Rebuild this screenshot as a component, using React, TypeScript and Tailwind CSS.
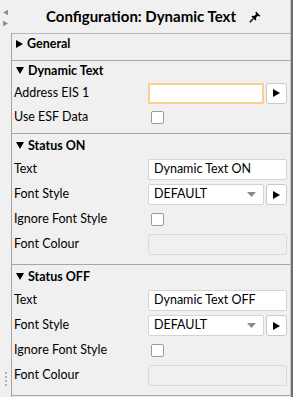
import React from 'react';

const font = { fontFamily: 'Lato, "Noto Sans", sans-serif' };

function Tri({ dir, className }: { dir: 'right' | 'down' | 'left'; className?: string }) {
  const d = dir === 'right' ? 'M0 0L7 4L0 8Z' : dir === 'left' ? 'M7 0L0 4L7 8Z' : 'M0 0L8 0L4 7Z';
  return (
    <svg width={dir === 'down' ? 8 : 7} height={8} viewBox={dir === 'down' ? '0 0 8 8' : '0 0 7 8'} className={className}>
      <path d={d} fill="currentColor" />
    </svg>
  );
}

function Pin() {
  return (
    <svg width="12" height="12" viewBox="0 0 12 12" className="text-black">
      <path d="M7 0.5L11.5 5L10.3 5.6L8.9 4.8L6.9 6.8L7.3 8.8L6.4 9.6L2.4 5.6L3.2 4.7L5.2 5.1L7.2 3.1L6.4 1.7Z" fill="currentColor" />
      <path d="M4.2 7.8L0.8 11.2" stroke="currentColor" strokeWidth="1.4" />
    </svg>
  );
}

function ArrowButton() {
  return (
    <div className="ml-[2px] flex h-[21px] w-[21px] shrink-0 items-center justify-center rounded-[3px] border border-[#c9c9c9] bg-white text-black">
      <Tri dir="right" />
    </div>
  );
}

function Checkbox() {
  return <div className="ml-[3px] h-[13px] w-[13px] rounded-[2px] border border-[#9a9a9a] bg-white" />;
}

function Row({ label, h = 'h-[25px]', children }: { label: string; h?: string; children?: React.ReactNode }) {
  return (
    <div className={`flex ${h} shrink-0 items-center`}>
      <div className="w-[136px] pl-[2px] text-[12.5px] text-black">{label}</div>
      <div className="flex flex-1 items-center pr-[3px]">{children}</div>
    </div>
  );
}

function Header({ title, open, h }: { title: string; open?: boolean; h: string }) {
  return (
    <div className={`flex ${h} items-center gap-[4px] pl-[4px] text-[12.5px] font-bold text-black`}>
      <Tri dir={open ? 'down' : 'right'} />
      <span>{title}</span>
    </div>
  );
}

function StatusSection({ title, text }: { title: string; text: string }) {
  return (
    <div className="shrink-0 border-t border-[#a6a6a6] pt-[1px] pb-[7px]">
      <Header title={title} open h="h-[22px]" />
      <Row label="Text">
        <div className="flex h-[21px] flex-1 items-center rounded-[2px] border border-[#d4d4d4] bg-white pl-[5px] text-[12.5px] text-black">
          {text}
        </div>
      </Row>
      <Row label="Font Style">
        <div className="flex h-[21px] flex-1 items-center justify-between rounded-[2px] border border-[#d4d4d4] bg-white pl-[5px] pr-[7px] text-[12.5px] text-black">
          <span>DEFAULT</span>
          <svg width="9" height="5" viewBox="0 0 9 5">
            <path d="M0 0H9L4.5 5Z" fill="#8a8a8a" />
          </svg>
        </div>
        <ArrowButton />
      </Row>
      <Row label="Ignore Font Style">
        <Checkbox />
      </Row>
      <Row label="Font Colour">
        <div className="h-[21px] flex-1 rounded-[3px] border border-[#dadada] bg-[#f0f0f0]" />
      </Row>
    </div>
  );
}

export default function App() {
  return (
    <div className="flex h-[397px] w-[293px] overflow-hidden bg-[#f0f0f0]" style={font}>
      <div className="flex w-[11px] shrink-0 flex-col items-center text-[#8c8c8c]">
        <Tri dir="left" className="mt-[9px] h-[7px] w-[5px]" />
        <Tri dir="right" className="mt-[4px] h-[7px] w-[5px]" />
        <div className="mt-[345px] flex flex-col gap-[2px]">
          <div className="h-[2px] w-[2px] bg-[#b0b0b0]" />
          <div className="h-[2px] w-[2px] bg-[#b0b0b0]" />
          <div className="h-[2px] w-[2px] bg-[#b0b0b0]" />
          <div className="h-[2px] w-[2px] bg-[#b0b0b0]" />
        </div>
      </div>
      <div className="flex min-h-0 flex-1 flex-col">
        <div className="flex h-[33px] shrink-0 items-center justify-center gap-[13px] pl-[6px]">
          <span className="text-[15px] font-bold text-black">Configuration: Dynamic Text</span>
          <Pin />
        </div>
        <div className="flex flex-1 flex-col border-l border-[#a6a6a6]">
          <div className="h-[27px] shrink-0 border-t border-[#b8b8b8]">
            <Header title="General" h="h-[20px]" />
          </div>
          <div className="shrink-0 border-t border-[#a6a6a6] pb-[4px]">
            <Header title="Dynamic Text" open h="h-[20px]" />
            <Row label="Address EIS 1" h="h-[24px]">
              <div className="h-[21px] flex-1 border-2 border-[#fbd08a] bg-white" />
              <ArrowButton />
            </Row>
            <Row label="Use ESF Data" h="h-[24px]">
              <Checkbox />
            </Row>
          </div>
          <StatusSection title="Status ON" text="Dynamic Text ON" />
          <StatusSection title="Status OFF" text="Dynamic Text OFF" />
          <div className="border-t border-[#a6a6a6]" />
        </div>
      </div>
      <div className="w-[1px] shrink-0 bg-[#c4c4c4]" />
      <div className="w-[2px] shrink-0 bg-[#6f6f6f]" />
    </div>
  );
}
